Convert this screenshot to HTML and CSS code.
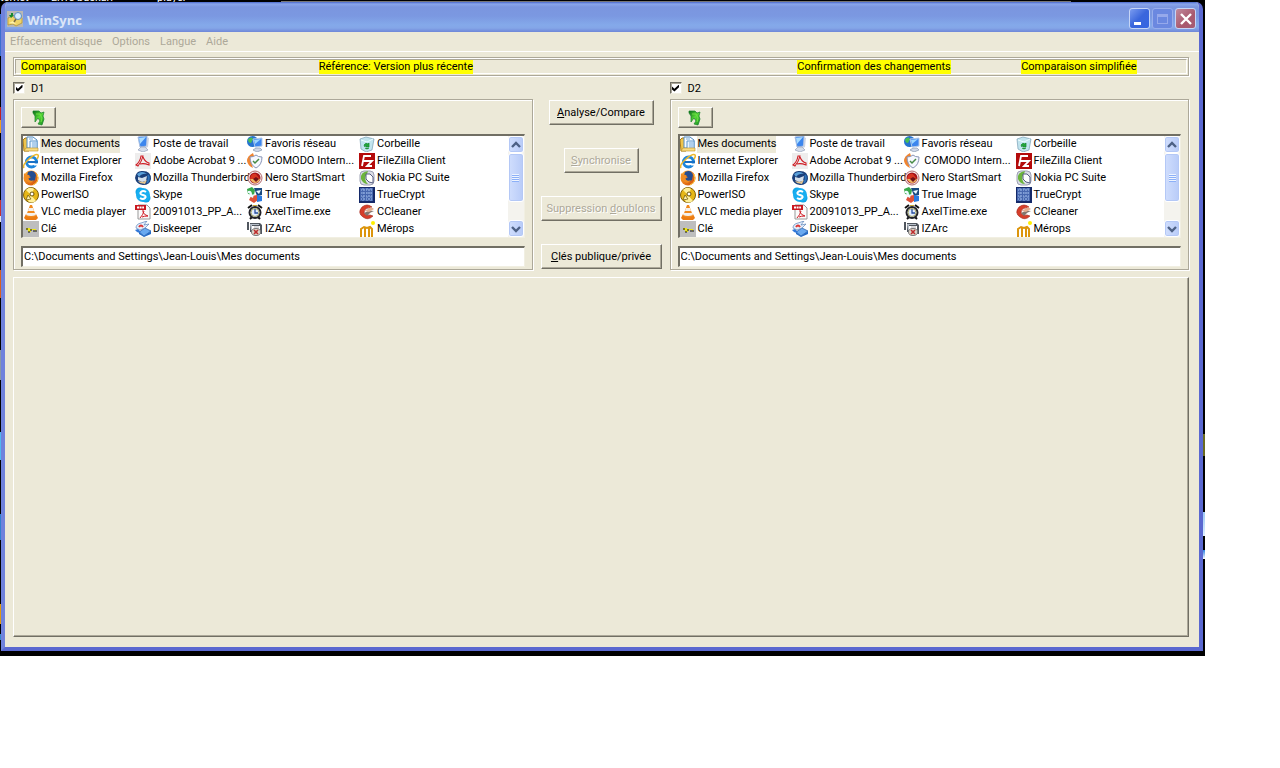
FILE: index.html
```html
<!DOCTYPE html>
<html lang="fr">
<head>
<meta charset="utf-8">
<title>WinSync</title>
<link rel="stylesheet" href="styles.css">
</head>
<body>
<svg class="defs" aria-hidden="true">
<defs>
<linearGradient id="gb" x1="0" y1="0" x2="1" y2="1"><stop offset="0" stop-color="#b8ecff"/><stop offset="1" stop-color="#2070dd"/></linearGradient>
<linearGradient id="gg" x1="0" y1="0" x2="1" y2="1"><stop offset="0" stop-color="#0a6a18"/><stop offset=".5" stop-color="#58d838"/><stop offset="1" stop-color="#148a20"/></linearGradient>
<linearGradient id="gf" x1="0" y1="0" x2="1" y2="1"><stop offset="0" stop-color="#ffb030"/><stop offset="1" stop-color="#d04808"/></linearGradient>
</defs>
<symbol id="app" viewBox="0 0 16 16"><rect width="16" height="16" fill="#b9b8b4"/><path d="M1 7l4-2 3 2 5-2 2 2v5l-6 3-3-2-5 1z" fill="#efd468" stroke="#a58524" stroke-width=".6"/><path d="M2 12l4-2 3 3" fill="#fff2a8"/><path d="M4 2v2H2l2 3 3-3H6V2z" fill="#178a2e"/><circle cx="11" cy="5" r="3.500" fill="#d5ecff" stroke="#5d8fc4"/><path d="M9 8l-2 3" stroke="#7a6a40" stroke-width="1.500"/></symbol>
<symbol id="up" viewBox="0 0 16 16"><path d="M2 1h6l2 2 3-1-1 4 1 3-2 6-4-1 2-3-2-3-3 4V6L2 3z" fill="url(#gg)" stroke="#16802a" stroke-width=".7"/><path d="M5 4h4l2 4-1 4" stroke="#6ee444" fill="none"/></symbol>
<symbol id="docs" viewBox="0 0 16 16"><path d="M0 4l2-2h3l1 2v11H1z" fill="#eec44c" stroke="#a87a16"/><path d="M4 1h6l4 3v8H4z" fill="#f8fcff" stroke="#508bc0"/><path d="M7 5h7v9H7z" fill="#e8f4ff" stroke="#5b96cc"/><path d="M6 3h4M9 7h4M9 9h4M9 11h4" stroke="#76abda"/><path d="M1 15l2-3h12v3z" fill="#f8dc82" stroke="#c09024" stroke-width=".6"/></symbol>
<symbol id="pc" viewBox="0 0 16 16"><path d="M3 1l9-1v10l-7 1z" fill="#3c86ee" stroke="#a9bddf"/><path d="M4 2l7-1-6 7z" fill="#a9dcff"/><path d="M12 1l2 1-1 9-2 1z" fill="#ccd4e4"/><path d="M6 11h4l3 3-5 2-5-2z" fill="#d5ddea" stroke="#8794b0" stroke-width=".6"/></symbol>
<symbol id="net" viewBox="0 0 16 16"><circle cx="5.500" cy="5.500" r="5.500" fill="#2674d0"/><path d="M1 3q4-3 5 0l-2 4q-3 0-3-4z" fill="#49be54"/><path d="M6 3l9-1v8l-7 1z" fill="#3c86ee" stroke="#b2c9ea"/><path d="M7 4l7-1-6 5z" fill="#9cd6ff"/><path d="M9 12h4l2 2-5 2-4-2z" fill="#d0d8e8" stroke="#7689a5" stroke-width=".6"/></symbol>
<symbol id="bin" viewBox="0 0 16 16"><path d="M1 3l6-2 8 2-2 11-6 2-5-3z" fill="#c1e4ee" stroke="#789fb4" stroke-width=".7"/><path d="M2 4l6 2 6-3" fill="none" stroke="#eefcff"/><path d="M5 9q2-3 4-1l1-1v4H7l1-1q-2-1-2 1zM6 12q2 2 4 0" fill="#23a939" stroke="#13862d" stroke-width=".7"/></symbol>
<symbol id="ie" viewBox="0 0 16 16"><circle cx="8.500" cy="9" r="5" fill="#fff" stroke="#1d86dd" stroke-width="3"/><path d="M5 9h10" stroke="#1870c5" stroke-width="2"/><path d="M11 10.500h5v2h-5z" fill="#fff"/><path d="M1 15Q-1 12 6 6q7-6 9-4 1 1-1 4" fill="none" stroke="#edb82d" stroke-width="1.600"/></symbol>
<symbol id="acro" viewBox="0 0 16 16"><path d="M0 0h16v16H0z" fill="#eeeded"/><path d="M6 3h2q-1 5-5 10l-2-1Q5 9 6 3zM8 4q2 5 6 6v2q-5-2-9-1" fill="none" stroke="#cf1c24" stroke-width="1.100"/></symbol>
<symbol id="comodo" viewBox="0 0 16 16"><path d="M6 0Q0 3 0 8q1 5 6 7Q3 8 7 3z" fill="#ef8431"/><path d="M3 4q4 0 6-2 2 2 6 2 0 8-6 11-6-3-6-11z" fill="#f6f8ff" stroke="#8793b5"/><path d="M6 8l2 2 4-4" stroke="#478a45" fill="none" stroke-width="1.500"/></symbol>
<symbol id="fz" viewBox="0 0 16 16"><path d="M0 0h16v16H0z" fill="#b40b0b"/><path d="M3 13L5 3h7M4 8h4M8 8h5l-5 5h5" fill="none" stroke="#fff" stroke-width="1.800"/></symbol>
<symbol id="fox" viewBox="0 0 16 16"><circle cx="8" cy="8" r="7.500" fill="url(#gf)"/><path d="M5 2q6-3 8 3l-1 5q-4 4-7-1l3-2-4-1z" fill="#264e91"/><path d="M1 3l2 2q2-1 4 1L5 8q1 4 6 2Q8 15 3 11 0 8 1 3z" fill="#f08c22"/><path d="M14 4q3 8-4 11" fill="none" stroke="#ffd34d"/></symbol>
<symbol id="bird" viewBox="0 0 16 16"><path d="M0 8Q1 0 8 1q8 0 8 8-1 6-8 6-7-1-8-7z" fill="#1b3f7a"/><path d="M2 4q5-4 10 0-5-1-8 3z" fill="#5aa0da"/><path d="M3 7l4 1 5-2-1 5-4 1-4-2z" fill="#d3deeb"/><path d="M3 11l5 1 4-2-2 4-5-1z" fill="#e3c58f"/><path d="M13 5q2 4-1 8" stroke="#2d71b9" stroke-width="2" fill="none"/></symbol>
<symbol id="nero" viewBox="0 0 16 16"><circle cx="8" cy="8" r="7" fill="#f4eeee" stroke="#b46a6e"/><circle cx="8" cy="8" r="5.500" fill="#a51118"/><path d="M3 9q1-6 6-5l4 5z" fill="#d73522"/><path d="M3 9h10q-1 4-5 4-3 0-5-4z" fill="#f0b465"/><path d="M6 9l3-2 3 2-3 3z" fill="#711015"/></symbol>
<symbol id="nokia" viewBox="0 0 16 16"><rect x="1" y="1" width="14" height="14" rx="4" fill="#d9dcE5" stroke="#9da0b3"/><path d="M9 1Q1 2 2 9q2 5 7 5-5-5-1-10z" fill="#6cb43c"/><path d="M7 4h4l3 3v6l-4-1-3-3z" fill="#fff" stroke="#575d80"/></symbol>
<symbol id="iso" viewBox="0 0 16 16"><circle cx="8" cy="8" r="7.500" fill="#e6b718" stroke="#80610b"/><path d="M8 8L3 3q4-4 8-1zM8 8l5 6q-5 3-8 0z" fill="#fff09b"/><circle cx="9" cy="7" r="2" fill="#fff" stroke="#6b5108"/><path d="M3 13l2-5 3 4z" fill="#fff3b0" stroke="#6b5108" stroke-width=".7"/></symbol>
<symbol id="skype" viewBox="0 0 16 16"><circle cx="5" cy="5" r="4.500" fill="#10a5e8"/><circle cx="11" cy="11" r="4.500" fill="#10a5e8"/><circle cx="8" cy="8" r="7" fill="#18aef0"/><path d="M11 5Q8 3 6 5t2 3 2 3-5 0" fill="none" stroke="#fff" stroke-width="2"/></symbol>
<symbol id="true" viewBox="0 0 16 16"><path d="M0 2l5-2 3 3-1 5-6-1z" fill="#38a849"/><path d="M7 1h8v7l-5 1z" fill="#194a80"/><path d="M4 9l6-1 1 5-4 3-5-3z" fill="#dd5138"/><path d="M10 8l5 1v5l-5 1z" fill="#2a7ae0"/><path d="M1 4q4-1 4 4l2-1-1 4-4-2 1-1q0-2-2-2zM9 4l5-1-2 4zM11 10l3 3" fill="#ecfbff"/></symbol>
<symbol id="crypt" viewBox="0 0 16 16"><path d="M0 0h16v16H0z" fill="#142969"/><path d="M1 1h13v13H1z" fill="#4666ae"/><path d="M2 3h12M2 6h12M2 9h12M2 12h12" stroke="#a8c4f1" stroke-dasharray="1 1 2 1"/><path d="M4 1v13M8 1v13M12 1v13" stroke="#8aa8de" stroke-dasharray="2 2"/></symbol>
<symbol id="vlc" viewBox="0 0 16 16"><path d="M1 14l2-4h10l2 4-2 2H3z" fill="#ec7c12"/><path d="M7 1h2l4 11q-5 3-10 0z" fill="#f28a1e"/><path d="M6 4h4l1 3H5zM4 9h8l1 2q-5 2-10 0z" fill="#f5f1ec"/></symbol>
<symbol id="pdf" viewBox="0 0 16 16"><path d="M3 1h9l3 3v11H3z" fill="#fafafa" stroke="#999"/><path d="M0 1h11v5H0z" fill="#c91920"/><path d="M2 3.500h7" stroke="#fff" stroke-width="2" stroke-dasharray="2 .6"/><path d="M7 7h2q-1 4-4 7M8 8q1 3 5 4-4 0-6 1" stroke="#d01b24" fill="none"/></symbol>
<symbol id="clock" viewBox="0 0 16 16"><path d="M1 4l4-3M15 4l-4-3M3 15l2-2M13 15l-2-2" stroke="#111" stroke-width="2"/><circle cx="8" cy="8.500" r="5.500" fill="#e1ecff" stroke="#22222a" stroke-width="2"/><circle cx="8" cy="8.500" r="4" fill="none" stroke="#a9a867"/><path d="M8 5v4h3" stroke="#244c9c" fill="none" stroke-width="1.300"/><path d="M6 1h4v1H6z" fill="#c8a934"/></symbol>
<symbol id="cc" viewBox="0 0 16 16"><path d="M13 3Q8-1 3 3q-5 6 1 10 5 4 10-1l-3-1q-5 1-6-3 2-5 6-4z" fill="#d63e2a" stroke="#9e241a" stroke-width=".6"/><path d="M5 9q5-3 10-2-4 1-7 5z" fill="#83766f"/><path d="M6 7l6-4 3 2-5 3z" fill="#e4ae90"/></symbol>
<symbol id="key" viewBox="0 0 16 16"><path d="M0 0h16v16H0z" fill="#bebebe"/><path d="M3 7h4v1h6v2h-1V9H8v2H5V9H3z" fill="#eee51b"/><path d="M3 8h2M7 9h2M10 10h4M5 11h2" stroke="#111"/></symbol>
<symbol id="disk" viewBox="0 0 16 16"><path d="M4 11l6-4 6 3-7 5z" fill="#69a9f0" stroke="#1c55a5" stroke-width=".7"/><path d="M4 11l5 4 7-5v3l-7 3-5-3z" fill="#246bc6"/><path d="M1 7Q1 3 6 2l6-2-3 4 5-1-4 4-5 2z" fill="#e5effb" stroke="#5a83b9" stroke-width=".7"/><path d="M0 9q3 4 6 2L3 8z" fill="#3278d8"/><path d="M4 6q2-3 4 0" stroke="#dd3636" fill="none" stroke-width="2"/></symbol>
<symbol id="iz" viewBox="0 0 16 16"><path d="M0 1h2v8H0zM3 2h10l2 2v9h-2V5H5v6H3z" fill="#50565e"/><path d="M3 3h9v1H5v5H4z" fill="#b8c0ca"/><path d="M7 5h5v6H7z" fill="#d8d8dc"/><ellipse cx="9" cy="11" rx="4.500" ry="3.500" fill="#ded6ca" stroke="#777"/><path d="M7 9l4 4M11 9l-4 4" stroke="#bd2c2c" stroke-width="1.600"/></symbol>
<symbol id="mer" viewBox="0 0 16 16"><path d="M2 16V8l3-2 3 1 3-1 2 2v8M6 7v9M10 7v9" fill="none" stroke="#dc950c" stroke-width="2"/><circle cx="14" cy="2" r="2" fill="#fff000"/></symbol>
<symbol id="chev" viewBox="0 0 10 10"><path d="M1 7l4-4 4 4" fill="none" stroke="#4d6185" stroke-width="2.400"/></symbol>
</svg>
<main class="desktop">
<div class="strip" aria-hidden="true"><span>ternet</span><span>Livre backari</span><span>player</span></div>
<div class="window">
<header class="title"><svg class="ico"><use href="#app"/></svg><h1>WinSync</h1>
<button class="cap min" aria-label="Réduire"><i></i></button><button class="cap max" aria-label="Agrandir"><i></i></button><button class="cap close" aria-label="Fermer"><svg viewBox="0 0 12 12"><path d="M1 1l10 10M11 1L1 11" stroke="#fff" stroke-width="2.400"/></svg></button></header>
<nav class="menu"><button>Effacement disque</button><button>Options</button><button>Langue</button><button>Aide</button></nav>
<div class="client">
<div class="status"><div class="status-in"><div><mark>Comparaison</mark></div><div><mark>Référence: Version plus récente</mark></div><div><mark>Confirmation des changements</mark></div><div><mark>Comparaison simplifiée</mark></div></div></div>
<div class="panes">
<section class="pane"><label class="check"><input type="checkbox" checked>D1</label>
<div class="group"><button class="btn up" aria-label="Dossier parent"><svg class="ico"><use href="#up"/></svg></button>
<div class="list"><ul>
<li class="sel"><svg class="ico"><use href="#docs"/></svg><span>Mes documents</span></li><li><svg class="ico"><use href="#pc"/></svg><span>Poste de travail</span></li><li><svg class="ico"><use href="#net"/></svg><span>Favoris réseau</span></li><li><svg class="ico"><use href="#bin"/></svg><span>Corbeille</span></li>
<li><svg class="ico"><use href="#ie"/></svg><span>Internet Explorer</span></li><li><svg class="ico"><use href="#acro"/></svg><span>Adobe Acrobat 9 ...</span></li><li><svg class="ico"><use href="#comodo"/></svg><span>&nbsp;COMODO Intern...</span></li><li><svg class="ico"><use href="#fz"/></svg><span>FileZilla Client</span></li>
<li><svg class="ico"><use href="#fox"/></svg><span>Mozilla Firefox</span></li><li><svg class="ico"><use href="#bird"/></svg><span>Mozilla Thunderbird</span></li><li><svg class="ico"><use href="#nero"/></svg><span>Nero StartSmart</span></li><li><svg class="ico"><use href="#nokia"/></svg><span>Nokia PC Suite</span></li>
<li><svg class="ico"><use href="#iso"/></svg><span>PowerISO</span></li><li><svg class="ico"><use href="#skype"/></svg><span>Skype</span></li><li><svg class="ico"><use href="#true"/></svg><span>True Image</span></li><li><svg class="ico"><use href="#crypt"/></svg><span>TrueCrypt</span></li>
<li><svg class="ico"><use href="#vlc"/></svg><span>VLC media player</span></li><li><svg class="ico"><use href="#pdf"/></svg><span>20091013_PP_A...</span></li><li><svg class="ico"><use href="#clock"/></svg><span>AxelTime.exe</span></li><li><svg class="ico"><use href="#cc"/></svg><span>CCleaner</span></li>
<li><svg class="ico"><use href="#key"/></svg><span>Clé</span></li><li><svg class="ico"><use href="#disk"/></svg><span>Diskeeper</span></li><li><svg class="ico"><use href="#iz"/></svg><span>IZArc</span></li><li><svg class="ico"><use href="#mer"/></svg><span>Mérops</span></li>
</ul><div class="scroll"><button aria-label="Monter"><svg><use href="#chev"/></svg></button><div class="track"><div class="thumb"><i></i></div></div><button class="down" aria-label="Descendre"><svg><use href="#chev"/></svg></button></div></div>
<input class="path" type="text" aria-label="Chemin D1" value="C:\Documents and Settings\Jean-Louis\Mes documents"></div></section>
<div class="actions"><button class="btn mid"><span><u>A</u>nalyse/Compare</span></button><button class="btn small" disabled><span><u>S</u>ynchronise</span></button><button class="btn" disabled><span>Suppression <u>d</u>oublons</span></button><button class="btn"><span><u>C</u>lés publique/privée</span></button></div>
<section class="pane"><label class="check"><input type="checkbox" checked>D2</label>
<div class="group"><button class="btn up" aria-label="Dossier parent"><svg class="ico"><use href="#up"/></svg></button>
<div class="list"><ul>
<li class="sel"><svg class="ico"><use href="#docs"/></svg><span>Mes documents</span></li><li><svg class="ico"><use href="#pc"/></svg><span>Poste de travail</span></li><li><svg class="ico"><use href="#net"/></svg><span>Favoris réseau</span></li><li><svg class="ico"><use href="#bin"/></svg><span>Corbeille</span></li>
<li><svg class="ico"><use href="#ie"/></svg><span>Internet Explorer</span></li><li><svg class="ico"><use href="#acro"/></svg><span>Adobe Acrobat 9 ...</span></li><li><svg class="ico"><use href="#comodo"/></svg><span>&nbsp;COMODO Intern...</span></li><li><svg class="ico"><use href="#fz"/></svg><span>FileZilla Client</span></li>
<li><svg class="ico"><use href="#fox"/></svg><span>Mozilla Firefox</span></li><li><svg class="ico"><use href="#bird"/></svg><span>Mozilla Thunderbird</span></li><li><svg class="ico"><use href="#nero"/></svg><span>Nero StartSmart</span></li><li><svg class="ico"><use href="#nokia"/></svg><span>Nokia PC Suite</span></li>
<li><svg class="ico"><use href="#iso"/></svg><span>PowerISO</span></li><li><svg class="ico"><use href="#skype"/></svg><span>Skype</span></li><li><svg class="ico"><use href="#true"/></svg><span>True Image</span></li><li><svg class="ico"><use href="#crypt"/></svg><span>TrueCrypt</span></li>
<li><svg class="ico"><use href="#vlc"/></svg><span>VLC media player</span></li><li><svg class="ico"><use href="#pdf"/></svg><span>20091013_PP_A...</span></li><li><svg class="ico"><use href="#clock"/></svg><span>AxelTime.exe</span></li><li><svg class="ico"><use href="#cc"/></svg><span>CCleaner</span></li>
<li><svg class="ico"><use href="#key"/></svg><span>Clé</span></li><li><svg class="ico"><use href="#disk"/></svg><span>Diskeeper</span></li><li><svg class="ico"><use href="#iz"/></svg><span>IZArc</span></li><li><svg class="ico"><use href="#mer"/></svg><span>Mérops</span></li>
</ul><div class="scroll"><button aria-label="Monter"><svg><use href="#chev"/></svg></button><div class="track"><div class="thumb"><i></i></div></div><button class="down" aria-label="Descendre"><svg><use href="#chev"/></svg></button></div></div>
<input class="path" type="text" aria-label="Chemin D2" value="C:\Documents and Settings\Jean-Louis\Mes documents"></div></section>
</div>
<div class="results"></div>
</div>
</div>
</main>
</body>
</html>
```
FILE: styles.css
```css
* { box-sizing: border-box; }
body { margin: 0; background: #fff; color: #000; font: 11px/13px Roboto, "Liberation Sans", sans-serif; }
button, input { font: inherit; color: inherit; margin: 0; padding: 0; border: 0; background: none; }
.defs { position: absolute; width: 0; height: 0; }
.ico { width: 16px; height: 16px; flex: none; display: block; }
.desktop {
  position: relative; display: flex; min-height: calc(100vh - 112px);
  margin: 0 75px 112px 0; padding: 2px 2px 5px 1px;
  background:
    linear-gradient(#777, #777) 281px 1px / calc(100% - 415px) 1px no-repeat,
    linear-gradient(#6b6b20, #6b6b20) 100% 434px / 2px 22px no-repeat,
    linear-gradient(#9cc8f4, #dff0ff) 100% 512px / 2px 24px no-repeat,
    linear-gradient(#2a80e0, #fff) 100% 550px / 2px 9px no-repeat,
    linear-gradient(#000 14px, #3a6ed0 14px 56px, #000 56px 107px, #c02020 107px 120px, #f0a020 120px 133px, #000 133px 200px, #c83030 200px 216px, #e8e8e8 216px 222px, #000 222px 270px, #d86020 270px 298px, #000 298px 350px, #8898a8 350px 380px, #000 380px 432px, #50b8f0 432px 460px, #000 460px 514px, #3080d0 514px 540px, #000 540px 604px, #e09a10 604px 624px, #000 624px 634px, #3888c8 634px 640px, #000 640px) 0 0 / 1px 100% no-repeat,
    #000;
}
.strip { position: absolute; inset: 0 0 auto 0; height: 4px; overflow: hidden; color: #fff; display: grid; grid-template-columns: 51px 106px 1fr; grid-template-rows: 4px; align-items: end; white-space: nowrap; }
.window { position: relative; flex: 1; min-width: 0; display: flex; flex-direction: column; border: solid; border-width: 0 4px 4px; border-color: #7082dc #5a68d0 #5a68d0 #7082dc; border-radius: 7px 7px 0 0; background: #ece9d8; overflow: hidden; }
.title { display: flex; align-items: center; gap: 2px; height: 30px; margin: 0 -4px; padding: 3px 7px 0 6px; background: linear-gradient(#4a68cc, #8aa6ea 2px, #7b96df 5px, #7b98e1 14px, #84a9ea 23px, #84a6e8 26px, #6f87d8); }
.title h1 { flex: 1; margin: 0 0 0 2px; padding-top: 2px; font: bold 13px/18px "Open Sans", sans-serif; color: #dce6f8; }
.cap { width: 21px; height: 21px; display: grid; place-items: center; border: 1px solid #c6d5f6; border-radius: 3px; background: linear-gradient(135deg, #7b9cf0, #3a66dc 50%, #3565e2); }
.cap i { display: block; }
.min i { width: 7px; height: 3px; background: #fff; margin: 9px 4px 0 0; }
.max { border-color: #98aeec; background: #6b88e0; }
.max i { width: 11px; height: 10px; border: 1px solid #96a9eb; border-top-width: 3px; }
.close { background: linear-gradient(135deg, #c08a9c, #a9596e 60%, #a65c74); }
.close svg { width: 12px; height: 12px; }
.menu { display: flex; gap: 10px; height: 20px; padding-left: 5px; border-bottom: 1px solid #fff; color: #aca899; }
.client { flex: 1; display: flex; flex-direction: column; padding: 5px 10px 10px 8px; }
.status { padding: 1px; border: 1px solid #aca899; box-shadow: 1px 1px #fff, inset 1px 1px #fff; }
.status-in { display: grid; grid-template-columns: 298fr 479fr 224fr 165fr; padding: 0 0 0 5px; border: 1px solid; border-color: #aca899 #fff #fff #aca899; }
.status-in mark { display: block; width: max-content; background: #ff0; white-space: nowrap; line-height: 14px; }
.status-in div { height: 13px; }
.panes { display: grid; grid-template-columns: 1fr 121px 1fr; gap: 8px; margin: 5px 0 0; }
.pane { min-width: 0; }
.check { display: flex; align-items: center; gap: 6px; height: 14px; width: max-content; margin-bottom: 4px; }
.check input { appearance: none; width: 12px; height: 12px; background: #fff; border: 1px solid; border-color: #716f64 #f1efe2 #f1efe2 #716f64; box-shadow: inset 1px 1px #aca899; display: grid; place-items: center; }
.check input:checked::before { content: ""; width: 7px; height: 7px; background: #000; clip-path: polygon(0 30%, 35% 60%, 100% 0, 100% 40%, 35% 100%, 0 70%); }
.group { padding: 7px 7px 2px; border: 1px solid #aca899; box-shadow: 1px 1px #fff, inset 1px 1px #fff; }
.btn { display: grid; place-items: center; height: 25px; width: 100%; border: 1px solid; border-color: #fff #716f64 #716f64 #fff; box-shadow: inset -1px -1px #aca899; white-space: nowrap; }
.btn:disabled { color: #aca899; text-shadow: 1px 1px #fff; }
.btn.up { width: 35px; height: 21px; margin-bottom: 6px; }
.list { display: flex; height: 104px; overflow: hidden; border: solid; border-width: 2px 1px 1px 2px; border-color: #716f64 #f1efe2 #f1efe2 #716f64; background: #fff; }
.list ul { flex: 1; min-width: 0; margin: 0; padding: 0; list-style: none; display: grid; grid-template-columns: repeat(4, 112px); grid-auto-rows: 17px; }
.list li { display: flex; gap: 1px; white-space: nowrap; min-width: 0; }
.list span { padding: 1px 0 1px 1px; height: 17px; }
.sel span { background: #ece9d8; }
.scroll { width: 16px; display: flex; flex-direction: column; background: #f4f3ee; }
.scroll button, .thumb { width: 16px; border: 1px solid #fff; border-radius: 3px; background: linear-gradient(90deg, #d0defd, #b8cbf8); box-shadow: inset 0 0 0 1px #b4c8f6; display: grid; place-items: center; }
.scroll button { height: 17px; }
.scroll svg { width: 10px; height: 10px; }
.down svg { transform: rotate(180deg); }
.track { flex: 1; }
.thumb { height: 49px; }
.thumb i { width: 7px; height: 8px; background: repeating-linear-gradient(#eef4fe 0 1px, #8cb0f8 1px 2px); }
.path { display: block; width: 100%; height: 21px; margin-top: 8px; padding: 0 0 2px 1px; background: #fff; border: solid; border-width: 2px 1px 1px 2px; border-color: #716f64 #f1efe2 #f1efe2 #716f64; }
.actions { display: flex; flex-direction: column; align-items: center; gap: 23px; padding-top: 19px; }
.btn.mid { width: 105px; }
.btn.small { width: 75px; }
.results { flex: 1; margin-top: 7px; border: 1px solid; border-color: #fff #716f64 #716f64 #fff; box-shadow: inset -1px -1px #aca899; }
```
